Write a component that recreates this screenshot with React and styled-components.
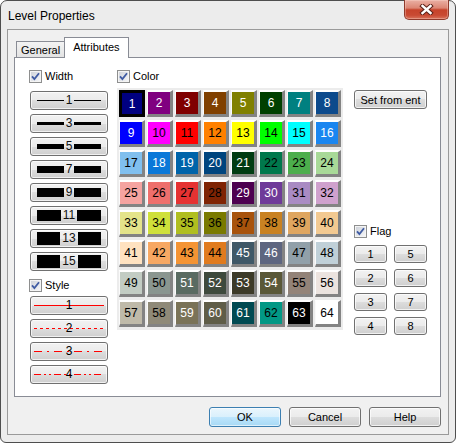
import React from "react";
import styled, { createGlobalStyle, css } from "styled-components";

const GlobalStyle = createGlobalStyle`
  html, body { margin: 0; padding: 0; background: #fff; }
  body {
    font-family: "Liberation Sans", Arial, sans-serif;
    font-size: 11px;
    color: #000;
  }
  * { box-sizing: border-box; }
`;

const WIDTHS = [1, 3, 5, 7, 9, 11, 13, 15];

// dash patterns for the line-style buttons
const DASHES = [undefined, "3 3", "8 5 2 5", "7 3 2 3 2 3"];

// [background, white text]
const COLORS = [
  ["#000080", 1], ["#800080", 1], ["#800000", 1], ["#804000", 1],
  ["#808000", 1], ["#004000", 1], ["#008080", 1], ["#0c4a8c", 1],
  ["#0000ff", 1], ["#ff00ff", 0], ["#ff0000", 0], ["#ff8000", 0],
  ["#ffff00", 0], ["#00ff00", 0], ["#00ffff", 0], ["#1a86f0", 1],
  ["#80bfee", 0], ["#0a78d8", 1], ["#0064aa", 1], ["#00457e", 1],
  ["#003c12", 1], ["#00784c", 0], ["#4cae4c", 0], ["#a8d998", 0],
  ["#f5a3a0", 0], ["#ee6f6c", 0], ["#e53232", 0], ["#7f2404", 0],
  ["#4d0050", 1], ["#6f3a99", 1], ["#a98bc3", 0], ["#cfa1cd", 0],
  ["#e4e48a", 0], ["#cfe03a", 0], ["#b0be20", 0], ["#7a7a00", 0],
  ["#a8530c", 0], ["#c98222", 0], ["#dfa660", 0], ["#f2c991", 0],
  ["#ffe2c0", 0], ["#f7a863", 0], ["#f49434", 0], ["#e07b1e", 0],
  ["#3f5867", 1], ["#5e6680", 1], ["#91a0a9", 0], ["#c0d0d8", 0],
  ["#c2ccc3", 0], ["#8a9690", 0], ["#5a6b62", 1], ["#3e4a3d", 1],
  ["#3c3a28", 1], ["#5a5838", 1], ["#938378", 0], ["#ebe3df", 0],
  ["#bfbaa9", 0], ["#8f8a78", 0], ["#7a7358", 1], ["#5f5d48", 1],
  ["#004a52", 1], ["#029885", 0], ["#000000", 1], ["#ffffff", 0],
];

const CheckBox = () => (
  <svg width="13" height="13" viewBox="0 0 13 13">
    <defs>
      <linearGradient id="cbfill" x1="0" y1="0" x2="1" y2="1">
        <stop offset="0" stopColor="#cfd3da" />
        <stop offset="1" stopColor="#f4f5f7" />
      </linearGradient>
    </defs>
    <rect x="0.5" y="0.5" width="12" height="12" fill="#f4f4f4" stroke="#8e8f8f" />
    <rect x="2" y="2" width="9" height="9" fill="url(#cbfill)" />
    <path d="M3 6.3 L5.4 9 L10 3.2" fill="none" stroke="#3f5ba3" strokeWidth="1.8" />
  </svg>
);

const CloseGlyph = () => (
  <svg width="15" height="11" viewBox="0 0 15 11">
    <path d="M3.5 2 L11.5 9 M11.5 2 L3.5 9" stroke="#5b2219" strokeWidth="4.4" strokeLinecap="square" />
    <path d="M3.5 2 L11.5 9 M11.5 2 L3.5 9" stroke="#fff" strokeWidth="2.4" strokeLinecap="square" />
  </svg>
);

const App = () => {
  return (
    <>
      <GlobalStyle />
      <Window>
        <TitleBar>
          <Title>Level Properties</Title>
          <CloseButton>
            <CloseGlyph />
          </CloseButton>
        </TitleBar>

        <Client>
          <TabStrip>
            <Tab>General</Tab>
            <Tab $active>Attributes</Tab>
          </TabStrip>

          <Panel>
            <LeftColumn>
              <CheckRow>
                <CheckBox />
                <span>Width</span>
              </CheckRow>
              <ButtonList>
                {WIDTHS.map((w) => (
                  <LineButton key={w}>
                    <Bar $thick={Math.min(w, 13)} />
                    <BarNum>{w}</BarNum>
                    <Bar $thick={Math.min(w, 13)} />
                  </LineButton>
                ))}
              </ButtonList>

              <CheckRow $top={8}>
                <CheckBox />
                <span>Style</span>
              </CheckRow>
              <ButtonList $top={4}>
                {DASHES.map((dash, i) => (
                  <StyleButton key={i}>
                    <svg width="70" height="17" viewBox="0 0 70 17">
                      <line x1="0" y1="8.5" x2="70" y2="8.5" stroke="#ff0000" strokeWidth="1" strokeDasharray={dash} />
                    </svg>
                    <StyleNum>{i + 1}</StyleNum>
                  </StyleButton>
                ))}
              </ButtonList>
            </LeftColumn>

            <ColorColumn>
              <CheckRow>
                <CheckBox />
                <span>Color</span>
              </CheckRow>
              <ColorGrid>
                {COLORS.map(([bg, white], i) => (
                  <ColorCell key={i} $bg={bg} $white={white} $selected={i === 0}>
                    {i + 1}
                  </ColorCell>
                ))}
              </ColorGrid>
            </ColorColumn>

            <RightColumn>
              <Button $width={73} $height={19} $top={20}>
                Set from ent
              </Button>
              <CheckRow $top={116}>
                <CheckBox />
                <span>Flag</span>
              </CheckRow>
              <FlagGrid>
                {[1, 5, 2, 6, 3, 7, 4, 8].map((n) => (
                  <Button key={n} $height={18}>
                    {n}
                  </Button>
                ))}
              </FlagGrid>
            </RightColumn>
          </Panel>

          <Footer>
            <Button $width={72} $height={20} $default>
              OK
            </Button>
            <Button $width={72} $height={20}>
              Cancel
            </Button>
            <Button $width={72} $height={20}>
              Help
            </Button>
          </Footer>
        </Client>
      </Window>
    </>
  );
};

export default App;

const Window = styled.div`
  width: 456px;
  height: 443px;
  border: 1px solid #4e4e4e;
  border-radius: 7px 7px 6px 6px;
  background: #ececec;
  padding: 0 6px 7px 6px;

  display: flex;
  flex-direction: column;
`;

const TitleBar = styled.div`
  height: 28px;
  display: flex;
  align-items: flex-start;
  justify-content: space-between;
`;

const Title = styled.div`
  padding: 8px 0 0 1px;
  font-size: 12px;
  line-height: 14px;
`;

const CloseButton = styled.div`
  width: 45px;
  height: 20px;
  margin-top: -1px;
  border: 1px solid #8f3a2c;
  border-top: none;
  border-radius: 0 0 5px 5px;
  background: linear-gradient(#eab0a4 0%, #dc8674 42%, #c6432b 52%, #c94a33 80%, #d8735c 100%);
  box-shadow: inset 0 0 0 1px rgba(255, 220, 210, 0.35);

  display: flex;
  align-items: center;
  justify-content: center;
`;

const Client = styled.div`
  flex: 1;
  border: 1px solid #9a9a9a;
  background: #f0f0f0;
  padding: 7px 7px 6px 6px;

  display: flex;
  flex-direction: column;
`;

const TabStrip = styled.div`
  height: 20px;
  padding-left: 2px;
  position: relative;
  z-index: 1;

  display: flex;
  align-items: flex-end;
`;

const Tab = styled.div`
  height: 16px;
  padding: 0 4px;
  border: 1px solid #898c95;
  border-bottom: none;
  background: linear-gradient(#f3f3f3, #e3e3e3);
  line-height: 16px;

  ${(p) =>
    p.$active &&
    css`
      height: 21px;
      margin-bottom: -1px;
      margin-left: -1px;
      padding: 0 8px;
      background: #fff;
      line-height: 18px;
    `}
`;

const Panel = styled.div`
  height: 340px;
  border: 1px solid #898c95;
  background: #fff;
  padding: 12px 0 0 14px;

  display: flex;
  align-items: flex-start;
`;

const LeftColumn = styled.div`
  width: 80px;
  display: flex;
  flex-direction: column;
`;

const CheckRow = styled.div`
  height: 13px;
  margin-top: ${(p) => p.$top || 0}px;
  display: flex;
  align-items: center;
  gap: 3px;
  line-height: 13px;

  svg {
    flex: none;
  }
`;

const ButtonList = styled.div`
  margin: ${(p) => p.$top || 8}px 0 0 1px;
  display: flex;
  flex-direction: column;
  gap: 4px;
`;

const buttonFace = css`
  border: 1px solid #707070;
  border-radius: 3px;
  background: linear-gradient(#f2f2f2 0%, #ebebeb 50%, #dddddd 50%, #cfcfcf 100%);
  box-shadow: inset 0 0 0 1px rgba(255, 255, 255, 0.7);
`;

const LineButton = styled.div`
  ${buttonFace}
  width: 78px;
  height: 19px;
  padding: 0 6px;

  display: flex;
  align-items: center;
`;

const Bar = styled.div`
  flex: 1;
  height: ${(p) => p.$thick}px;
  background: #000;
`;

const BarNum = styled.span`
  padding: 0 2px;
  font-size: 12px;
  line-height: 13px;
  color: #111;
`;

const StyleButton = styled.div`
  ${buttonFace}
  width: 78px;
  height: 19px;
  padding: 0 3px;

  display: grid;
  place-items: center;

  & > * {
    grid-area: 1 / 1;
  }

  svg {
    display: block;
  }
`;

const StyleNum = styled.span`
  font-size: 12px;
  line-height: 13px;
`;

const ColorColumn = styled.div`
  width: 226px;
  margin-left: 8px;
  display: flex;
  flex-direction: column;
`;

const ColorGrid = styled.div`
  margin-top: 5px;
  padding: 2px 2px 3px 2px;
  background: #ececec;

  display: grid;
  grid-template-columns: repeat(8, 26px);
  grid-auto-rows: 27px;
  column-gap: 2px;
  row-gap: 3px;
`;

const ColorCell = styled.div`
  background: ${(p) => p.$bg};
  color: ${(p) => (p.$white ? "#fff" : "#000")};
  border-style: solid;
  border-width: 2px 3px 3px 1px;
  border-color: #fff #838383 #838383 #fafafa;
  font-size: 12px;

  display: flex;
  align-items: center;
  justify-content: center;

  ${(p) =>
    p.$selected &&
    css`
      border-width: 3px;
      border-color: #000;
    `}
`;

const RightColumn = styled.div`
  width: 73px;
  margin-left: 11px;
  display: flex;
  flex-direction: column;
`;

const Button = styled.div`
  ${buttonFace}
  width: ${(p) => (p.$width ? `${p.$width}px` : "auto")};
  height: ${(p) => p.$height}px;
  margin-top: ${(p) => p.$top || 0}px;
  font-size: 11px;

  display: flex;
  align-items: center;
  justify-content: center;

  ${(p) =>
    p.$default &&
    css`
      border-color: #3c7fb1;
      background: linear-gradient(#eaf6fd 0%, #d9f0fc 50%, #bee6fd 50%, #a7d9f5 100%);
      box-shadow: inset 0 0 0 1px rgba(255, 255, 255, 0.6);
    `}
`;

const FlagGrid = styled.div`
  margin-top: 7px;
  display: grid;
  grid-template-columns: 33px 33px;
  grid-auto-rows: 18px;
  column-gap: 7px;
  row-gap: 6px;
`;

const Footer = styled.div`
  margin-top: 10px;
  display: flex;
  justify-content: flex-end;
  gap: 8px;
`;
